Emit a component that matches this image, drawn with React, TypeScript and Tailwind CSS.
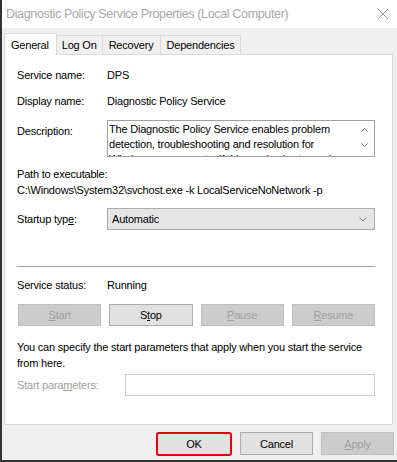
import React from "react";

const font = { fontFamily: '"Liberation Sans", Arial, sans-serif' };

function Btn({
  children,
  disabled,
  className = "",
}: {
  children: React.ReactNode;
  disabled?: boolean;
  className?: string;
}) {
  return (
    <div
      className={
        "h-[22px] flex items-center justify-center border " +
        (disabled
          ? "bg-[#cccccc] border-[#bfbfbf] text-[#a0a0a0] "
          : "bg-[#e1e1e1] border-[#adadad] text-black ") +
        className
      }
    >
      {children}
    </div>
  );
}

export default function App() {
  return (
    <div
      className="w-[397px] h-[462px] flex flex-col bg-[#f0f0f0] border-l-2 border-b-2 border-[#333333] text-black text-[11px] tracking-[-0.2px] leading-[16px]"
      style={font}
    >
      {/* title bar */}
      <div className="h-[28px] bg-white flex items-center justify-between pl-[4px] pr-[7px] shrink-0">
        <span className="text-[12.5px] text-[#a8a8a8] tracking-[-0.35px]">
          Diagnostic Policy Service Properties (Local Computer)
        </span>
        <svg width="12" height="12" viewBox="0 0 12 12" className="mr-[1px]">
          <path d="M1 1L11 11M11 1L1 11" stroke="#9a9a9a" strokeWidth="1" />
        </svg>
      </div>

      {/* tabs */}
      <div className="flex items-end h-[26px] pl-[2px] shrink-0">
        <div className="h-[22px] pl-[6px] pr-[7px] flex items-center bg-white border border-b-0 border-[#d9d9d9] relative top-[1px] z-10">
          General
        </div>
        <div className="h-[19px] px-[5px] flex items-center border border-l-0 border-b-0 border-[#d9d9d9]">
          Log On
        </div>
        <div className="h-[19px] px-[6px] flex items-center border border-l-0 border-b-0 border-[#d9d9d9]">
          Recovery
        </div>
        <div className="h-[19px] px-[6px] flex items-center border border-l-0 border-b-0 border-[#d9d9d9]">
          Dependencies
        </div>
      </div>

      {/* panel */}
      <div className="ml-[2px] mr-[4px] h-[371px] bg-white border border-[#d9d9d9] flex flex-col pl-[12px] pr-[17px] shrink-0">
        <div className="mt-[12px] h-[16px] flex">
          <span className="w-[90px]">Service name:</span>
          <span>DPS</span>
        </div>
        <div className="mt-[10px] h-[16px] flex">
          <span className="w-[90px]">Display name:</span>
          <span>Diagnostic Policy Service</span>
        </div>
        <div className="mt-[11px] flex">
          <span className="w-[90px] mt-[3px]">Description:</span>
          <div className="flex-1 h-[37px] border border-[#a0a0a0] flex overflow-hidden">
            <div className="flex-1 pl-[1px] pt-[1px] leading-[15px] overflow-hidden">
              The Diagnostic Policy Service enables problem detection,
              troubleshooting and resolution for Windows components. If this
              service is stopped, diagnostics will no longer function.
            </div>
            <div className="w-[20px] flex flex-col items-center pt-[7px] gap-[11px]">
              <svg width="7" height="4" viewBox="0 0 7 4">
                <path d="M0.5 3.5L3.5 0.5L6.5 3.5" stroke="#707070" fill="none" />
              </svg>
              <svg width="7" height="4" viewBox="0 0 7 4">
                <path d="M0.5 0.5L3.5 3.5L6.5 0.5" stroke="#707070" fill="none" />
              </svg>
            </div>
          </div>
        </div>
        <div className="mt-[9px] h-[16px]">Path to executable:</div>
        <div className="h-[16px]">
          C:\Windows\System32\svchost.exe -k LocalServiceNoNetwork -p
        </div>
        <div className="mt-[10px] flex items-center">
          <span className="w-[90px]">
            Startup typ<u>e</u>:
          </span>
          <div className="flex-1 h-[22px] bg-[#e5e5e5] border border-[#acacac] flex items-center justify-between pl-[4px] pr-[7px]">
            <span>Automatic</span>
            <svg width="8" height="5" viewBox="0 0 8 5">
              <path d="M0.5 0.5L4 4L7.5 0.5" stroke="#808080" fill="none" />
            </svg>
          </div>
        </div>
        <div className="mt-[36px] h-px bg-[#a0a0a0]" />
        <div className="mt-[10px] h-[16px] flex">
          <span className="w-[90px]">Service status:</span>
          <span>Running</span>
        </div>
        <div className="mt-[11px] grid grid-cols-4 gap-[8px] pl-[1px]">
          <Btn disabled>
            <u>S</u>tart
          </Btn>
          <Btn>
            S<u>t</u>op
          </Btn>
          <Btn disabled>
            <u>P</u>ause
          </Btn>
          <Btn disabled>
            <u>R</u>esume
          </Btn>
        </div>
        <div className="mt-[13px] pr-[10px]">
          You can specify the start parameters that apply when you start the
          service from here.
        </div>
        <div className="mt-[3px] flex items-center">
          <span className="w-[108px] text-[#a0a0a0]">
            Start para<u>m</u>eters:
          </span>
          <div className="flex-1 h-[22px] border border-[#cccccc] bg-white" />
        </div>
      </div>

      {/* footer */}
      <div className="flex justify-end gap-[8px] pr-[3px] mt-[7px]">
        <div className="w-[76px] h-[24px] rounded-[3px] border-[2px] border-[#e3000f] flex">
          <Btn className="flex-1 h-full border-0">OK</Btn>
        </div>
        <Btn className="w-[73px] h-[23px]">Cancel</Btn>
        <Btn disabled className="w-[73px] h-[23px]">
          <u>A</u>pply
        </Btn>
      </div>
    </div>
  );
}
